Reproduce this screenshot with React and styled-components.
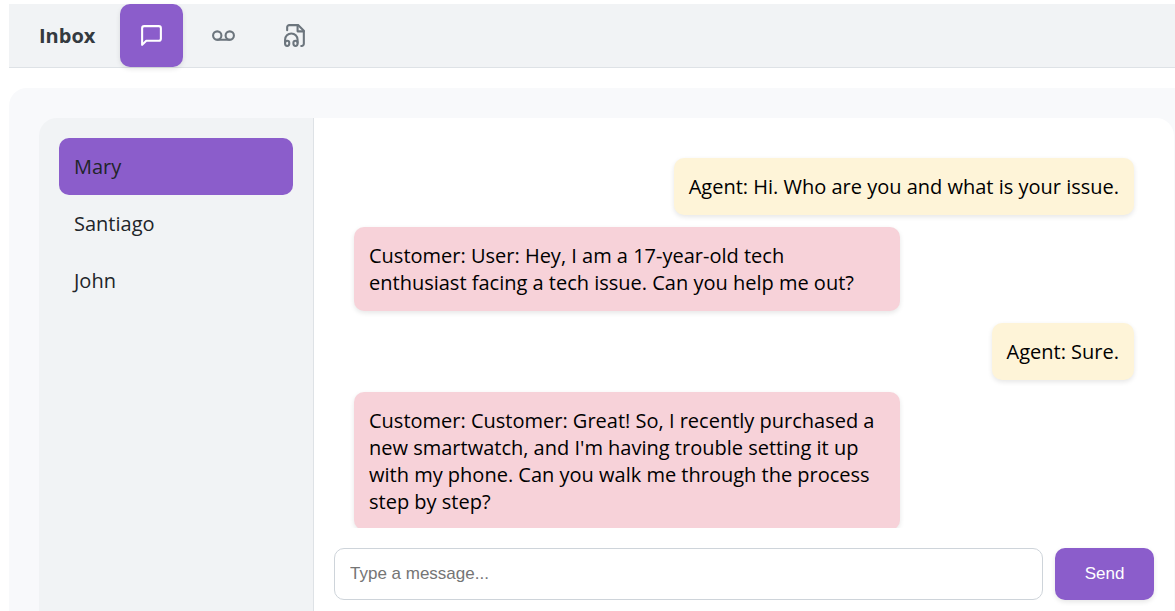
import React, { useState } from 'react';
import styled, { createGlobalStyle } from 'styled-components';
import { Voicemail } from 'lucide-react';

const GlobalStyle = createGlobalStyle`
  *, *::before, *::after { box-sizing: border-box; }
  body {
    margin: 0;
    background: #fff;
    color: #212529;
    font-family: "Open Sans", "Noto Sans", sans-serif;
    font-size: 20px;
    line-height: 27px;
  }
`;

const Page = styled.div`
  display: flex;
  flex-direction: column;
  gap: 20px;
  height: 100vh;
  padding: 4px 0 0 9px;
  overflow: hidden;
`;

const Header = styled.header`
  display: flex;
  align-items: center;
  gap: 25px;
  padding-left: 30px;
  background: #f1f3f5;
  border-bottom: 1px solid #dee2e6;
`;

const Title = styled.h1`
  margin: 0;
  color: #343a40;
  font-size: 20px;
  font-weight: 700;
  line-height: 27px;
`;

const Channels = styled.nav`
  display: flex;
  gap: 9px;
`;

const ChannelButton = styled.button`
  display: flex;
  align-items: center;
  justify-content: center;
  width: 63px;
  height: 63px;
  padding: 0;
  border: 0;
  border-radius: 10px;
  background: ${({ $active }) => ($active ? '#8b5dcb' : 'transparent')};
  color: ${({ $active }) => ($active ? '#fff' : '#6c757d')};
  box-shadow: ${({ $active }) => ($active ? '0 2px 5px rgba(0, 0, 0, 0.1)' : 'none')};
  cursor: pointer;
`;

const Workspace = styled.main`
  display: flex;
  flex: 1;
  min-height: 0;
  padding: 30px 1px 0 30px;
  background: #f8f9fb;
  border-top-left-radius: 18px;
`;

const Sidebar = styled.aside`
  flex: 0 0 275px;
  padding: 20px;
  background: #f1f3f5;
  border-right: 1px solid #dee2e6;
  border-top-left-radius: 18px;
`;

const ContactList = styled.ul`
  margin: 0;
  padding: 0;
  list-style: none;
`;

const Contact = styled.button`
  display: block;
  width: 100%;
  padding: 15px;
  border: 0;
  border-radius: 10px;
  background: ${({ $active }) => ($active ? '#8b5dcb' : 'transparent')};
  color: #212529;
  font: inherit;
  text-align: left;
  cursor: pointer;
`;

const Chat = styled.section`
  display: flex;
  flex: 1;
  flex-direction: column;
  min-width: 0;
  background: #fff;
  border-top-right-radius: 18px;
`;

const Messages = styled.div`
  display: flex;
  flex: 1;
  flex-direction: column;
  gap: 12px;
  min-height: 0;
  padding: 40px 40px 0;
  overflow: hidden;
`;

const Message = styled.p`
  flex-shrink: 0;
  align-self: ${({ $agent }) => ($agent ? 'flex-end' : 'flex-start')};
  max-width: 70%;
  margin: 0;
  padding: 15px;
  border-radius: 10px;
  background: ${({ $agent }) => ($agent ? '#fef4d8' : '#f7d2d9')};
  color: #000;
  box-shadow: 0 2px 5px rgba(0, 0, 0, 0.1);
`;

const Composer = styled.form`
  display: flex;
  gap: 12px;
  padding: 20px 20px 11px;
`;

const MessageInput = styled.input`
  flex: 1;
  min-width: 0;
  height: 52px;
  padding: 0 15px;
  border: 1px solid #ced4da;
  border-radius: 10px;
  background: #fff;
  font-family: "Liberation Sans", Arial, sans-serif;
  font-size: 17px;
  &::placeholder { color: #757575; }
`;

const SendButton = styled.button`
  width: 99px;
  height: 52px;
  border: 0;
  border-radius: 10px;
  background: #8b5dcb;
  color: #fff;
  font-family: "Liberation Sans", Arial, sans-serif;
  font-size: 17px;
  box-shadow: 0 2px 5px rgba(0, 0, 0, 0.1);
  cursor: pointer;
`;

function ChatIcon({ size }) {
  return (
    <svg width={size} height={size} viewBox="0 0 24 24" fill="none" stroke="currentColor"
      strokeWidth="2" strokeLinecap="round" strokeLinejoin="round" aria-hidden="true">
      <path d="M21 15a2 2 0 0 1-2 2H7l-4 4V5a2 2 0 0 1 2-2h14a2 2 0 0 1 2 2z" />
    </svg>
  );
}

function AudioFileIcon({ size }) {
  return (
    <svg width={size} height={size} viewBox="0 0 24 24" fill="none" stroke="currentColor"
      strokeWidth="2" strokeLinecap="round" strokeLinejoin="round" aria-hidden="true">
      <path d="M17.5 22h.5c.5 0 1-.2 1.4-.6.4-.4.6-.9.6-1.4V7.5L14.5 2H6c-.5 0-1 .2-1.4.6C4.2 3 4 3.5 4 4v3" />
      <path d="M14 2v6h6" />
      <path d="M10 20v-1a2 2 0 1 1 4 0v1a2 2 0 1 1-4 0Z" />
      <path d="M6 20v-1a2 2 0 1 0-4 0v1a2 2 0 1 0 4 0Z" />
      <path d="M2 19v-3a6 6 0 0 1 12 0v3" />
    </svg>
  );
}

const channels = [
  { label: 'Chats', Icon: ChatIcon },
  { label: 'Voicemail', Icon: Voicemail },
  { label: 'Recordings', Icon: AudioFileIcon },
];

const contacts = ['Mary', 'Santiago', 'John'];

const messages = [
  { agent: true, text: 'Agent: Hi. Who are you and what is your issue.' },
  { agent: false, text: 'Customer: User: Hey, I am a 17-year-old tech enthusiast facing a tech issue. Can you help me out?' },
  { agent: true, text: 'Agent: Sure.' },
  { agent: false, text: "Customer: Customer: Great! So, I recently purchased a new smartwatch, and I'm having trouble setting it up with my phone. Can you walk me through the process step by step?" },
];

export default function App() {
  const [channel, setChannel] = useState('Chats');
  const [contact, setContact] = useState('Mary');

  return (
    <>
      <GlobalStyle />
      <Page>
        <Header>
          <Title>Inbox</Title>
          <Channels>
            {channels.map(({ label, Icon }) => (
              <ChannelButton key={label} type="button" aria-label={label}
                $active={label === channel} onClick={() => setChannel(label)}>
                <Icon size={25} />
              </ChannelButton>
            ))}
          </Channels>
        </Header>
        <Workspace>
          <Sidebar>
            <ContactList>
              {contacts.map((name) => (
                <li key={name}>
                  <Contact type="button" $active={name === contact} onClick={() => setContact(name)}>
                    {name}
                  </Contact>
                </li>
              ))}
            </ContactList>
          </Sidebar>
          <Chat>
            <Messages>
              {messages.map(({ agent, text }) => (
                <Message key={text} $agent={agent}>{text}</Message>
              ))}
            </Messages>
            <Composer onSubmit={(event) => event.preventDefault()}>
              <MessageInput type="text" placeholder="Type a message..." aria-label="Message" />
              <SendButton type="submit">Send</SendButton>
            </Composer>
          </Chat>
        </Workspace>
      </Page>
    </>
  );
}
